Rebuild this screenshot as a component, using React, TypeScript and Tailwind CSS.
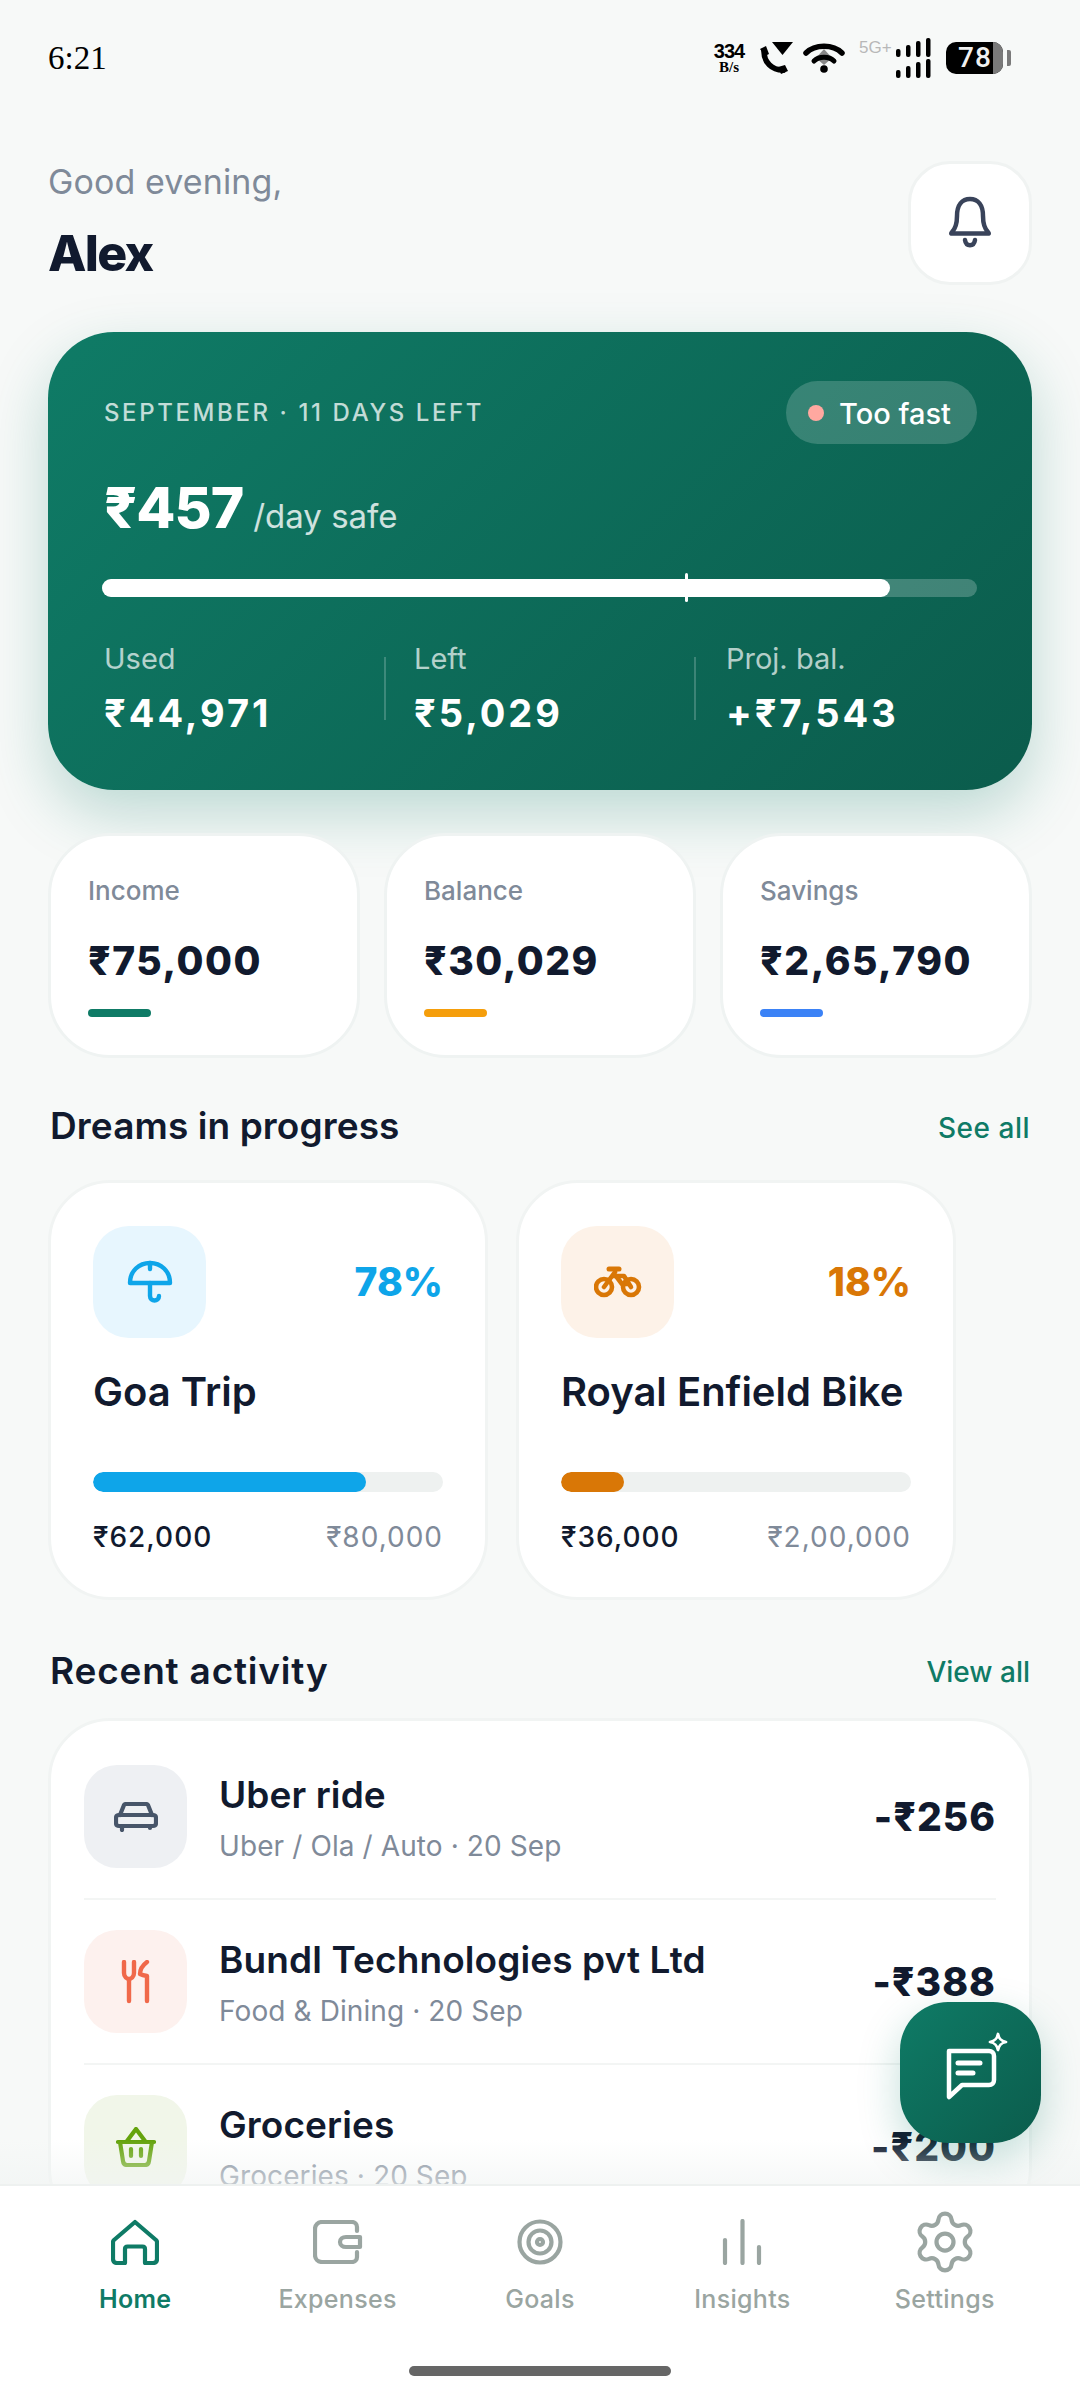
import React from "react";

const Bell = () => (
  <svg width="44" height="54" viewBox="0 0 44 54" fill="none" stroke="#39435a" strokeWidth="4.500" strokeLinecap="round" strokeLinejoin="round">
    <path d="M4 36 C8 32 9 28 9 20 C9 9 14 3 22 3 C30 3 35 9 35 20 C35 28 36 32 40 36 C41 37 41 37.5 40 37.5 L4 37.5 C3 37.5 3 37 4 36 Z" />
    <path d="M17 44 C18 51 26 51 27 44" />
  </svg>
);

const Umbrella = () => (
  <svg width="46" height="44" viewBox="0 0 46 44" fill="none" stroke="#0ea5e9" strokeWidth="4.400" strokeLinecap="round" strokeLinejoin="round">
    <path d="M3 23 C3 11 12 3 23 3 C34 3 43 11 43 23 Z" />
    <path d="M23 3 V9" />
    <path d="M23 23 V36 C23 42 32 42 32 36" />
  </svg>
);

const Bike = () => (
  <svg width="48" height="32" viewBox="0 0 48 32" fill="none" stroke="#d97706" strokeWidth="4.600" strokeLinecap="round" strokeLinejoin="round">
    <circle cx="10" cy="21" r="8" />
    <circle cx="37" cy="21" r="8" />
    <path d="M10 21 L21 6" />
    <path d="M15 3 H25" strokeWidth="5" />
    <path d="M19 10 H30 L37 21" />
    <path d="M22 10 L28 18 H34" />
  </svg>
);

const Car = () => (
  <svg width="44" height="30" viewBox="0 0 44 30" fill="none" stroke="#475569" strokeWidth="4.200" strokeLinecap="round" strokeLinejoin="round">
    <path d="M6 13 L10 3 C10.5 2 11 2 12 2 H32 C33 2 33.5 2 34 3 L38 13" />
    <path d="M5 13 H39 C41 13 42 14 42 16 V21 C42 23 41 24 39 24 H5 C3 24 2 23 2 21 V16 C2 14 3 13 5 13 Z" />
    <path d="M8 25 V28 M36 25 V26" />
  </svg>
);

const Cutlery = () => (
  <svg width="30" height="44" viewBox="0 0 30 44" fill="none" stroke="#f0694a" strokeWidth="4.400" strokeLinecap="round" strokeLinejoin="round">
    <path d="M3 2 V13 C3 17 6 19 8 19 C10 19 13 17 13 13 V2" />
    <path d="M8 19 V41" />
    <path d="M26 2 C22 5 19 9 19 14 C21 15 23 15.500 26 16 V41" />
  </svg>
);

const Basket = () => (
  <svg width="40" height="40" viewBox="0 0 40 40" fill="none" stroke="#65a30d" strokeWidth="4.200" strokeLinecap="round" strokeLinejoin="round">
    <path d="M2 15 H38" />
    <path d="M11 14 L20 2 L29 14" />
    <path d="M4 15 L7 34 C7.300 36.500 8.500 38 11 38 H29 C31.500 38 32.700 36.500 33 34 L36 15" />
    <path d="M15 22 V29 M25 22 V29" />
  </svg>
);

const Chat = () => (
  <svg width="70" height="72" viewBox="0 0 70 72" fill="none" className="-mt-[5px] ml-[21px] overflow-visible">
    <path d="M3 17 H43 C46 17 48 19 48 22 V46 C48 49 46 51 43 51 H16 L3 63 Z" stroke="#fff" strokeWidth="4.500" strokeLinejoin="round" />
    <path d="M12 29 H34 M12 39 H27" stroke="#fff" strokeWidth="5" strokeLinecap="round" />
    <path d="M52 0 C53 5 55 7 60 8 C55 9 53 11 52 16 C51 11 49 9 44 8 C49 7 51 5 52 0 Z" stroke="#fff" strokeWidth="2.800" strokeLinejoin="round" />
  </svg>
);

const navStroke = "#9aa5a1";

const NavHome = () => (
  <svg width="48" height="46" viewBox="0 0 48 46" fill="none" stroke="#0f7b66" strokeWidth="4.200" strokeLinejoin="round" strokeLinecap="round">
    <path d="M24 3 L45 21 C45.500 21.500 46 22 46 23 V40 C46 42.500 44.500 44 42 44 H34 V30 C34 28.500 33 27.500 31.500 27.500 H16.500 C15 27.500 14 28.500 14 30 V44 H6 C3.500 44 2 42.500 2 40 V23 C2 22 2.500 21.500 3 21 Z" />
  </svg>
);

const NavWallet = () => (
  <svg width="50" height="44" viewBox="0 0 50 44" fill="none" stroke={navStroke} strokeWidth="4.200" strokeLinejoin="round" strokeLinecap="round">
    <path d="M44 11 V7 C44 4 42 2 39 2 H9 C5 2 2 5 2 9 V35 C2 39 5 42 9 42 H39 C42 42 44 40 44 37 V32" />
    <path d="M47 17 H33 C29.500 17 27 19 27 22 C27 25 29.500 27 33 27 H47 Z" />
  </svg>
);

const NavGoal = () => (
  <svg width="46" height="46" viewBox="0 0 46 46" fill="none" stroke={navStroke} strokeWidth="4.200">
    <circle cx="23" cy="23" r="20.500" />
    <circle cx="23" cy="23" r="11.500" />
    <circle cx="23" cy="23" r="3" />
  </svg>
);

const NavInsights = () => (
  <svg width="40" height="46" viewBox="0 0 40 46" fill="none" stroke={navStroke} strokeWidth="4.200" strokeLinecap="round">
    <path d="M3 21 V44 M20.500 2 V44 M37 28 V44" />
  </svg>
);

const NavGear = () => (
  <svg width="68" height="68" viewBox="0 0 24 24" fill="none" stroke={navStroke} strokeWidth="1.500" strokeLinejoin="round" strokeLinecap="round">
    <path d="M9.671 4.136a2.34 2.34 0 0 1 4.659 0 2.34 2.34 0 0 0 3.319 1.915 2.34 2.34 0 0 1 2.33 4.033 2.34 2.34 0 0 0 0 3.831 2.34 2.34 0 0 1-2.33 4.033 2.34 2.34 0 0 0-3.319 1.915 2.34 2.34 0 0 1-4.659 0 2.34 2.34 0 0 0-3.32-1.915 2.34 2.34 0 0 1-2.33-4.033 2.34 2.34 0 0 0 0-3.831A2.34 2.34 0 0 1 6.35 6.051a2.34 2.34 0 0 0 3.319-1.915" />
    <circle cx="12" cy="12" r="3" />
  </svg>
);

const StatusIcons = () => (
  <div className="flex items-center mr-[47px]">
    <div className="flex flex-col items-center w-[36px] text-black">
      <span className="text-[20px] leading-[18px] font-bold font-['Liberation_Sans',sans-serif] tracking-[-1px]">334</span>
      <span className="text-[15px] leading-[15px] font-bold font-['Liberation_Serif',serif]">B/s</span>
    </div>
    <svg width="36" height="36" viewBox="0 0 36 36" className="ml-[11px]">
      <path d="M6 9 C5 22 14 31 27 30" fill="none" stroke="#000" strokeWidth="5.500" />
      <path d="M2 9 L8 6 L11 14 L7 16 Z M20 27 L27 25 L30 31 L23 34 Z" fill="#000" />
      <path d="M14 2 H35 L24.500 15 Z" fill="#000" />
    </svg>
    <svg width="42" height="34" viewBox="0 0 42 34" className="ml-[9px]">
      <path d="M13 17 L21 8 L29 17 L21 24 Z" fill="#888" />
      <path d="M3 12 C12 3 30 3 39 12" fill="none" stroke="#000" strokeWidth="5.500" strokeLinecap="round" />
      <path d="M11 20 C16 15 26 15 31 20" fill="none" stroke="#000" strokeWidth="5" strokeLinecap="round" />
      <circle cx="21" cy="28" r="3.800" fill="#000" />
    </svg>
    <span className="ml-[14px] w-[36px] self-start mt-[1px] text-[17px] leading-[18px] text-[#b8b8b8] font-['Liberation_Sans',sans-serif]">5G+</span>
    <svg width="36" height="40" viewBox="0 0 36 40" className="ml-[1px]">
      <g fill="#000">
        <rect x="0" y="11" width="4.500" height="8" rx="2" />
        <rect x="10" y="7" width="4.500" height="12" rx="2" />
        <rect x="20" y="3" width="4.500" height="16" rx="2" />
        <rect x="30" y="0" width="4.500" height="19" rx="2" />
        <rect x="0" y="32" width="4.500" height="8" rx="2" />
        <rect x="10" y="28" width="4.500" height="12" rx="2" />
        <rect x="20" y="24" width="4.500" height="16" rx="2" />
        <rect x="30" y="21" width="4.500" height="19" rx="2" />
      </g>
    </svg>
    <div className="ml-[14px] flex items-center">
      <div className="relative flex h-[32px] w-[57px] items-center overflow-hidden rounded-[10px] bg-black">
        <span className="absolute right-0 top-0 h-full w-[10px] bg-[#7a7a7a]" />
        <span className="relative ml-[12px] text-[28px] leading-[32px] font-medium tracking-[1px] text-[#f0f0f0] font-['Roboto',sans-serif]">78</span>
      </div>
      <span className="ml-[4px] h-[16px] w-[4px] rounded-r-[2px] bg-[#7a7a7a]" />
    </div>
  </div>
);

const Stat = ({ label, value }: { label: string; value: string }) => (
  <div className="w-[280px] shrink-0">
    <div className="text-[29px] leading-[34px] text-white/70">{label}</div>
    <div className="mt-[15px] text-[38px] leading-[44px] font-bold tracking-[3px] text-white whitespace-nowrap">{value}</div>
  </div>
);

const MiniCard = ({ label, value, barClass }: { label: string; value: string; barClass: string }) => (
  <div className="h-[225px] w-[312px] rounded-[62px] border-[3px] border-[#eff3f2] bg-white pl-[37px] pt-[39px]">
    <div className="text-[26px] leading-[32px] font-medium text-[#7f8a99]">{label}</div>
    <div className="mt-[30px] text-[39px] leading-[48px] font-extrabold tracking-[1.500px] text-[#111a2e]">{value}</div>
    <div className={`mt-[24px] h-[8px] w-[63px] rounded-full ${barClass}`} />
  </div>
);

const Dream = ({
  icon, iconBg, pct, pctClass, title, barClass, width, saved, target,
}: {
  icon: React.ReactNode; iconBg: string; pct: string; pctClass: string; title: string; barClass: string; width: string; saved: string; target: string;
}) => (
  <div className="h-[420px] w-[440px] rounded-[62px] border-[3px] border-[#f1f4f3] bg-white px-[42px] pt-[43px]">
    <div className="flex items-center justify-between">
      <div className={`flex h-[112px] w-[113px] items-center justify-center rounded-[36px] ${iconBg}`}>{icon}</div>
      <div className={`text-[39px] leading-[48px] font-extrabold ${pctClass}`}>{pct}</div>
    </div>
    <div className="mt-[29px] text-[40px] leading-[50px] font-semibold text-[#111a2e] whitespace-nowrap">{title}</div>
    <div className="mt-[55px] h-[20px] w-full overflow-hidden rounded-full bg-[#eef1f0]">
      <div className={`h-full rounded-full ${barClass} ${width}`} />
    </div>
    <div className="mt-[27px] flex justify-between text-[28px] leading-[36px] tracking-[1px]">
      <span className="font-medium text-[#111a2e]">{saved}</span>
      <span className="text-[#7f8a99]">{target}</span>
    </div>
  </div>
);

const Row = ({
  icon, iconBg, title, sub, amount, last,
}: {
  icon: React.ReactNode; iconBg: string; title: string; sub: string; amount: string; last?: boolean;
}) => (
  <div className={`flex items-center py-[30px] ${last ? "" : "border-b-[2px] border-[#f3f5f4]"}`}>
    <div className={`flex h-[103px] w-[103px] shrink-0 items-center justify-center rounded-[33px] ${iconBg}`}>{icon}</div>
    <div className="ml-[32px] flex-1 pt-[4px]">
      <div className="text-[37px] leading-[46px] font-semibold tracking-[0.100px] text-[#111a2e] whitespace-nowrap">{title}</div>
      <div className="mt-[8px] text-[28px] leading-[40px] tracking-[0.100px] text-[#7f8a99] whitespace-nowrap">{sub}</div>
    </div>
    <div className="text-[39px] leading-[48px] font-extrabold tracking-[1px] text-[#111a2e]">{amount}</div>
  </div>
);

const NavItem = ({ icon, label, active }: { icon: React.ReactNode; label: string; active?: boolean }) => (
  <div className="flex flex-col items-center">
    <div className="flex h-[58px] items-center justify-center">{icon}</div>
    <div className={`mt-[12px] text-[25px] leading-[32px] tracking-[0.300px] ${active ? "font-semibold text-[#0f7b66]" : "font-medium text-[#9aa5a1]"}`}>{label}</div>
  </div>
);

export default function App() {
  return (
    <div className="relative h-[2400px] w-[1080px] overflow-hidden bg-[#f7f9f8] font-[Inter,sans-serif]">
      <div className="flex h-[116px] items-center justify-between pl-[48px] pr-[22px]">
        <span className="text-[33px] leading-[40px] text-black font-['Liberation_Serif',serif]">6:21</span>
        <StatusIcons />
      </div>

      <div className="mt-[45px] flex items-start justify-between pl-[48px] pr-[48px]">
        <div className="-mt-[1px]">
          <div className="text-[34px] leading-[44px] tracking-[0.100px] text-[#7f8a99]">Good evening,</div>
          <div className="mt-[21px] text-[50px] leading-[56px] font-extrabold tracking-[-1.750px] text-[#111a2e]">Alex</div>
        </div>
        <div className="flex h-[124px] w-[124px] items-center justify-center rounded-[42px] border-[3px] border-[#f0f3f2] bg-white">
          <Bell />
        </div>
      </div>

      <div className="mx-[48px] mt-[47px] h-[458px] rounded-[66px] bg-[linear-gradient(135deg,#0f7b66,#0b5c4c)] pl-[56px] pr-[55px] pt-[49px] shadow-[0_24px_60px_rgba(15,123,102,0.25)]">
        <div className="flex h-[63px] items-center justify-between">
          <span className="text-[24px] font-medium tracking-[2.600px] text-white/75">SEPTEMBER · 11 DAYS LEFT</span>
          <span className="flex h-[63px] w-[191px] items-center rounded-full bg-white/[0.18] pl-[22px]">
            <span className="h-[16px] w-[16px] rounded-full bg-[#ffa8a0]" />
            <span className="ml-[15px] mt-[3px] text-[29px] font-medium text-white">Too fast</span>
          </span>
        </div>
        <div className="mt-[34px] flex h-[60px] items-baseline">
          <span className="text-[57px] leading-[60px] font-extrabold tracking-[-1px] text-white">₹457</span>
          <span className="ml-[10px] text-[33px] leading-[60px] text-white/80">/day safe</span>
        </div>
        <div className="relative mt-[41px] h-[18px] -ml-[2px] rounded-full bg-white/[0.22]">
          <div className="h-full w-[788px] rounded-full bg-white" />
          <div className="absolute left-[583px] top-[-6px] h-[29px] w-[3px] rounded-full bg-white" />
        </div>
        <div className="mt-[45px] flex">
          <Stat label="Used" value="₹44,971" />
          <div className="mr-[28px] h-[63px] w-[2px] shrink-0 self-center bg-white/20" />
          <Stat label="Left" value="₹5,029" />
          <div className="mr-[30px] h-[63px] w-[2px] shrink-0 self-center bg-white/20" />
          <Stat label="Proj. bal." value="+₹7,543" />
        </div>
      </div>

      <div className="mx-[48px] mt-[43px] flex justify-between">
        <MiniCard label="Income" value="₹75,000" barClass="bg-[#0f7b66]" />
        <MiniCard label="Balance" value="₹30,029" barClass="bg-[#f59e0b]" />
        <MiniCard label="Savings" value="₹2,65,790" barClass="bg-[#3b82f6]" />
      </div>

      <div className="mx-[50px] mt-[43px] flex h-[50px] items-center justify-between">
        <span className="text-[37px] font-semibold tracking-[0.100px] text-[#111a2e]">Dreams in progress</span>
        <span className="mt-[3px] text-[28px] font-medium tracking-[0.500px] text-[#0f7b66]">See all</span>
      </div>

      <div className="ml-[48px] mt-[29px] flex gap-[28px]">
        <Dream icon={<Umbrella />} iconBg="bg-[#e7f6fe]" pct="78%" pctClass="text-[#0ea5e9]" title="Goa Trip" barClass="bg-[#0ea5e9]" width="w-[78%]" saved="₹62,000" target="₹80,000" />
        <Dream icon={<Bike />} iconBg="bg-[#fdf2e8]" pct="18%" pctClass="text-[#d97706]" title="Royal Enfield Bike" barClass="bg-[#d97706]" width="w-[18%]" saved="₹36,000" target="₹2,00,000" />
      </div>

      <div className="mx-[50px] mt-[46px] flex h-[50px] items-center justify-between">
        <span className="text-[37px] font-semibold tracking-[0.800px] text-[#111a2e]">Recent activity</span>
        <span className="mt-[2px] text-[28px] font-medium text-[#0f7b66]">View all</span>
      </div>

      <div className="mx-[48px] mt-[22px] rounded-[62px] border-[3px] border-[#f1f4f3] bg-white px-[33px] pt-[14px]">
        <Row icon={<Car />} iconBg="bg-[#eef0f3]" title="Uber ride" sub="Uber / Ola / Auto · 20 Sep" amount="-₹256" />
        <Row icon={<Cutlery />} iconBg="bg-[#fdf1ee]" title="Bundl Technologies pvt Ltd" sub="Food & Dining · 20 Sep" amount="-₹388" />
        <Row icon={<Basket />} iconBg="bg-[#f1f6e9]" title="Groceries" sub="Groceries · 20 Sep" amount="-₹200" last />
      </div>

      <div className="absolute bottom-[216px] left-0 h-[44px] w-full bg-gradient-to-b from-[#f7f9f8]/0 to-[#f1f4f3]/60" />

      <div className="absolute left-[900px] top-[2002px] flex h-[141px] w-[141px] items-center justify-center rounded-[48px] bg-[linear-gradient(135deg,#0f7b66,#0b5c4c)] shadow-[0_16px_40px_rgba(15,123,102,0.25)]">
        <Chat />
      </div>

      <div className="absolute bottom-0 left-0 h-[216px] w-full border-t-[2px] border-[#eef1f0] bg-white">
        <div className="grid grid-cols-5 px-[34px] pt-[27px]">
          <NavItem icon={<NavHome />} label="Home" active />
          <NavItem icon={<NavWallet />} label="Expenses" />
          <NavItem icon={<NavGoal />} label="Goals" />
          <NavItem icon={<NavInsights />} label="Insights" />
          <NavItem icon={<NavGear />} label="Settings" />
        </div>
        <div className="absolute bottom-[24px] left-[409px] h-[10px] w-[262px] rounded-full bg-[#666666]" />
      </div>
    </div>
  );
}
